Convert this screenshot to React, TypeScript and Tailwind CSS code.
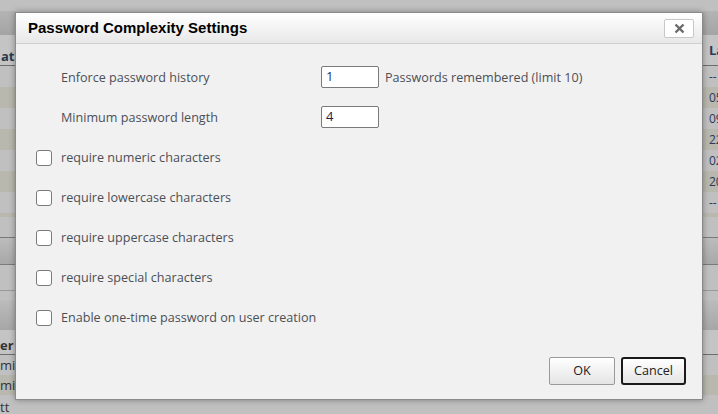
import React from 'react';

const sans = { fontFamily: '"Open Sans", "DejaVu Sans", sans-serif' };

const LeftStrip = () => (
  <div className="flex w-[15px] flex-col text-[13px] font-bold text-[#2a3a4a]">
    <div className="h-[11px] bg-[#c0c0c0]" />
    <div className="h-[24px] bg-gradient-to-b from-[#b4b4b4] to-[#a4a4a4]" />
    <div className="flex h-[31px] items-end overflow-hidden border-b border-[#6e6e6e] bg-[#c4c4c4] pb-[2px] pl-[1px] leading-none">atı</div>
    <div className="h-[21px] bg-[#c0c0c0]" />
    <div className="h-[21px] bg-[#b8b8ae]" />
    <div className="h-[21px] bg-[#c0c0c0]" />
    <div className="h-[21px] bg-[#b8b8ae]" />
    <div className="h-[21px] bg-[#c0c0c0]" />
    <div className="h-[21px] bg-[#b8b8ae]" />
    <div className="h-[21px] bg-[#c0c0c0]" />
    <div className="h-[4px] bg-[#b8b8ae]" />
    <div className="h-[20px] bg-[#c0c0c0]" />
    <div className="h-[28px] border-y border-[#7a7a7a] bg-gradient-to-b from-[#bcbcbc] to-[#a8a8a8]" />
    <div className="h-[25px] bg-[#c0c0c0]" />
    <div className="h-[10px] border-t border-[#9a9a9a] bg-[#c0c0c0]" />
    <div className="h-[30px] bg-gradient-to-b from-[#bcbcbc] to-[#a6a6a6]" />
    <div className="flex h-[25px] items-end overflow-hidden border-b border-[#6e6e6e] bg-[#c4c4c4] pb-[2px] leading-none text-[#333]">er</div>
    <div className="flex h-[20px] items-center overflow-hidden bg-[#c0c0c0] font-normal leading-none text-[#333]">mi</div>
    <div className="flex h-[20px] items-center overflow-hidden bg-[#b8b8ae] font-normal leading-none text-[#333]">mi</div>
    <div className="flex h-[19px] items-end overflow-hidden bg-[#c0c0c0] font-normal leading-none text-[#333]">tt</div>
  </div>
);

const RightStrip = () => (
  <div className="flex w-[15px] flex-col text-[12px] leading-none text-[#2a3a5a]">
    <div className="h-[11px] bg-[#c0c0c0]" />
    <div className="h-[24px] bg-gradient-to-b from-[#b4b4b4] to-[#a4a4a4]" />
    <div className="flex h-[31px] items-center overflow-hidden border-b border-[#6e6e6e] bg-[#c4c4c4] pl-[6px] text-[13px] font-bold">La</div>
    <div className="flex h-[21px] items-center overflow-hidden bg-[#c0c0c0] pl-[6px]">--</div>
    <div className="flex h-[21px] items-center overflow-hidden bg-[#b8b8ae] pl-[6px]">05</div>
    <div className="flex h-[21px] items-center overflow-hidden bg-[#c0c0c0] pl-[6px]">09</div>
    <div className="flex h-[21px] items-center overflow-hidden bg-[#b8b8ae] pl-[6px]">22</div>
    <div className="flex h-[21px] items-center overflow-hidden bg-[#c0c0c0] pl-[6px]">02</div>
    <div className="flex h-[21px] items-center overflow-hidden bg-[#b8b8ae] pl-[6px]">20</div>
    <div className="flex h-[21px] items-center overflow-hidden bg-[#c0c0c0] pl-[6px]">--</div>
    <div className="h-[4px] bg-[#b8b8ae]" />
    <div className="h-[20px] bg-[#c0c0c0]" />
    <div className="h-[28px] border-y border-[#7a7a7a] bg-gradient-to-b from-[#bcbcbc] to-[#a8a8a8]" />
    <div className="h-[25px] bg-[#c0c0c0]" />
    <div className="h-[10px] border-t border-[#9a9a9a] bg-[#c0c0c0]" />
    <div className="h-[30px] bg-gradient-to-b from-[#bcbcbc] to-[#a6a6a6]" />
    <div className="h-[25px] border-b border-[#6e6e6e] bg-[#c4c4c4]" />
    <div className="h-[20px] bg-[#c0c0c0]" />
    <div className="h-[20px] bg-[#b8b8ae]" />
    <div className="h-[19px] bg-[#c0c0c0]" />
  </div>
);

const Check = ({ label }: { label: string }) => (
  <label className="flex h-[40px] items-center gap-[9px] pl-[20px]">
    <span className="h-[16px] w-[16px] rounded-[3px] border border-[#7a7a7a] bg-white" />
    <span className="pt-[1px]">{label}</span>
  </label>
);

const Btn = ({ children, focused }: { children: React.ReactNode; focused?: boolean }) => (
  <button
    className={
      focused
        ? 'flex h-[28px] w-[65px] items-center justify-center rounded-[3px] border-2 border-[#1a1a1a] bg-gradient-to-b from-white to-[#e4e4e4] text-[12.6px] text-[#222]'
        : 'flex h-[28px] w-[66px] items-center justify-center rounded-[2px] border border-[#9a9a9a] bg-gradient-to-b from-white to-[#e4e4e4] text-[12.6px] text-[#222]'
    }
  >
    {children}
  </button>
);

export default function App() {
  return (
    <div className="relative h-[414px] w-[718px] overflow-hidden bg-[#c0c0c0]" style={sans}>
      <div className="flex h-full justify-between">
        <LeftStrip />
        <RightStrip />
      </div>

      {/* dialog */}
      <div className="absolute left-[15px] top-[12px] flex h-[388px] w-[688px] flex-col border border-[#8a8a8a] bg-[#f1f1f1] shadow-[0_0_6px_rgba(0,0,0,0.35)]">
        <div className="flex h-[31px] items-center justify-between border-b border-[#cfcfcf] bg-gradient-to-b from-white to-[#e8e8e8] pl-[12px] pr-[8px]">
          <h1 className="text-[15px] font-bold text-black" style={{ fontFamily: '"Liberation Sans", Arial, sans-serif' }}>
            Password Complexity Settings
          </h1>
          <button className="flex h-[19px] w-[30px] items-center justify-center rounded-[2px] border border-[#c8c8c8] bg-white">
            <svg width="11" height="11" viewBox="0 0 11 11">
              <path d="M1.5 1.5l8 8M9.5 1.5l-8 8" stroke="#6a6a6a" strokeWidth="2.4" />
            </svg>
          </button>
        </div>

        <div className="flex flex-1 flex-col text-[12.6px] text-[#4c4f56]">
          <div className="mt-[22px] flex h-[22px] items-center">
            <span className="w-[305px] pl-[45px] pt-[2px]">Enforce password history</span>
            <div className="flex h-[22px] w-[58px] items-center rounded-[2px] border border-[#7a7a7a] bg-white pl-[4px] text-[13px] text-[#1a3070]">1</div>
            <span className="ml-[6px] pt-[2px]">Passwords remembered (limit 10)</span>
          </div>
          <div className="mt-[18px] flex h-[22px] items-center">
            <span className="w-[305px] pl-[45px] pt-[2px]">Minimum password length</span>
            <div className="flex h-[22px] w-[58px] items-center rounded-[2px] border border-[#7a7a7a] bg-white pl-[4px] text-[13px] text-[#2a1a4a]">4</div>
          </div>
          <div className="mt-[10px] flex flex-col">
            <Check label="require numeric characters" />
            <Check label="require lowercase characters" />
            <Check label="require uppercase characters" />
            <Check label="require special characters" />
            <Check label="Enable one-time password on user creation" />
          </div>
          <div className="mt-auto flex justify-end gap-[6px] pb-[14px] pr-[16px]">
            <Btn>OK</Btn>
            <Btn focused>Cancel</Btn>
          </div>
        </div>
      </div>
    </div>
  );
}
